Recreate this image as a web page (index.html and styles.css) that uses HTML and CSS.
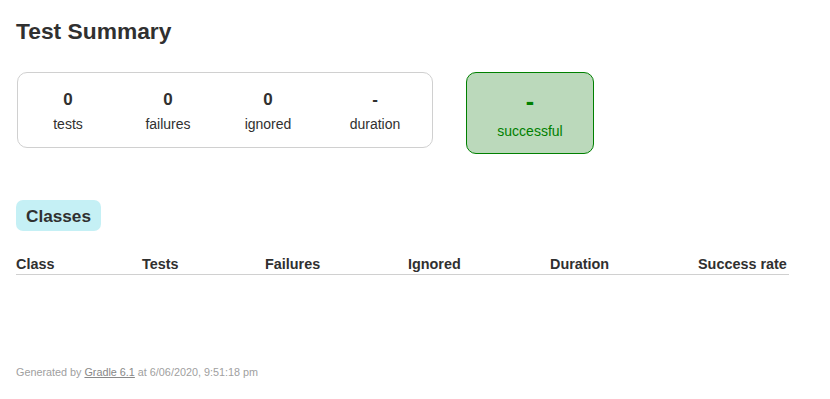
FILE: index.html
```html
<!DOCTYPE html>
<html lang="en">
<head>
<meta charset="utf-8">
<title>Test results - Test Summary</title>
<link rel="stylesheet" href="styles.css">
</head>
<body>
<div class="page">
  <h1 class="title">Test Summary</h1>
  <div class="summary">
    <div class="summary-group">
      <div class="info-box">
        <div class="counter">0</div>
        <p class="label">tests</p>
      </div>
      <div class="info-box">
        <div class="counter">0</div>
        <p class="label">failures</p>
      </div>
      <div class="info-box">
        <div class="counter">0</div>
        <p class="label">ignored</p>
      </div>
      <div class="info-box info-box-duration">
        <div class="counter">-</div>
        <p class="label">duration</p>
      </div>
    </div>
    <div class="success-rate">
      <div class="percent">-</div>
      <p class="label">successful</p>
    </div>
  </div>
  <div class="tabs">
    <h2 class="tab">Classes</h2>
  </div>
  <div class="class-table">
    <div class="th">Class</div>
    <div class="th">Tests</div>
    <div class="th">Failures</div>
    <div class="th">Ignored</div>
    <div class="th">Duration</div>
    <div class="th">Success rate</div>
  </div>
  <footer class="footer">Generated by <a class="footer-link" href="#">Gradle 6.1</a> at 6/06/2020, 9:51:18 pm</footer>
</div>
</body>
</html>
```
FILE: styles.css
```css
* {
  box-sizing: border-box;
}

html, body {
  margin: 0;
  padding: 0;
  background: #ffffff;
}

body {
  font-family: "Liberation Sans", Arial, sans-serif;
  font-size: 14px;
  color: #303030;
}

.page {
  padding: 18px 16px 20px 16px;
}

.title {
  margin: 0;
  font-size: 22.8px;
  line-height: 26px;
  font-weight: bold;
  white-space: nowrap;
}

.summary {
  margin-top: 28px;
  padding-left: 1px;
  display: flex;
  align-items: flex-start;
}

.summary-group {
  display: flex;
  border: 1px solid #d0d0d0;
  border-radius: 10px;
}

.info-box {
  width: 100px;
  padding: 16.5px 0 15px;
  text-align: center;
}

.info-box-duration {
  width: 114px;
}

.counter {
  font-size: 17px;
  line-height: 19.5px;
  font-weight: bold;
  margin-bottom: 7px;
}

.label {
  margin: 0;
  line-height: 16px;
}

.success-rate {
  margin-left: 33px;
  width: 128px;
  padding: 13.5px 0 14px;
  text-align: center;
  background-color: #bbd9bb;
  border: 1px solid #008000;
  border-radius: 10px;
  color: #008000;
}

.percent {
  font-size: 25.2px;
  line-height: 29px;
  font-weight: bold;
  margin-bottom: 7.5px;
}

.tabs {
  margin-top: 46px;
  display: flex;
}

.tab {
  margin: 0;
  padding: 6.5px 10px 5px 10px;
  font-size: 17.2px;
  line-height: 19.5px;
  font-weight: bold;
  background-color: #c5f0f5;
  border-radius: 7px;
  white-space: nowrap;
}

.class-table {
  margin-top: 25px;
  display: grid;
  grid-template-columns: 126px 123px 143px 142px 148px 91px;
  border-bottom: 1px solid #d0d0d0;
  width: 773px;
}

.th {
  font-weight: bold;
  font-size: 14.4px;
  line-height: 16px;
  padding-bottom: 2px;
  white-space: nowrap;
}

.footer {
  margin-top: 90.5px;
  font-size: 10.8px;
  line-height: 12px;
  color: #a0a0a0;
  white-space: nowrap;
}

.footer-link {
  color: #888888;
  text-decoration: underline;
}
```
